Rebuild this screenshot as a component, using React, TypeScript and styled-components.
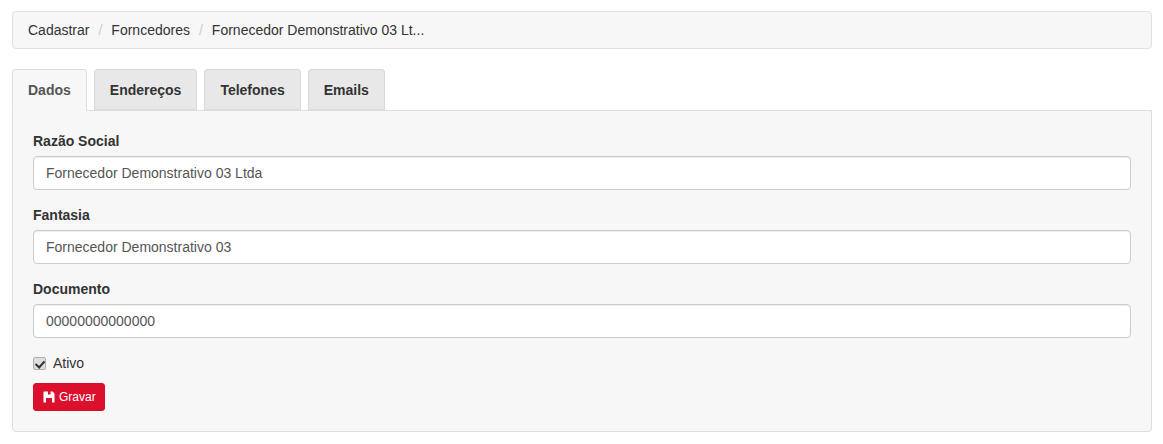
import React from 'react';
import styled, { createGlobalStyle } from 'styled-components';

const GlobalStyle = createGlobalStyle`
  * {
    box-sizing: border-box;
  }

  body {
    margin: 0;
    background: #fff;
    color: #333;
    font-family: 'Liberation Sans', Arial, sans-serif;
    font-size: 14px;
    line-height: 20px;
  }
`;

const crumbs = ['Cadastrar', 'Forncedores', 'Fornecedor Demonstrativo 03 Lt...'];
const tabs = ['Dados', 'Endereços', 'Telefones', 'Emails'];
const fields = [
  { label: 'Razão Social', value: 'Fornecedor Demonstrativo 03 Ltda' },
  { label: 'Fantasia', value: 'Fornecedor Demonstrativo 03' },
  { label: 'Documento', value: '00000000000000' },
];

const SaveIcon = () => (
  <svg width="12" height="12" viewBox="0 0 12 12" aria-hidden="true">
    <path
      fill="currentColor"
      fillRule="evenodd"
      d="M1 0.5H9.6L11.5 2.4V11.5H9V7H3V11.5H0.5V1C0.5 0.7 0.7 0.5 1 0.5ZM5 0.5H7.5V3.5H5Z"
    />
  </svg>
);

export default function App() {
  return (
    <Page>
      <GlobalStyle />
      <Breadcrumb>
        {crumbs.map((crumb, i) => (
          <Crumb key={crumb} first={i === 0}>
            {crumb}
          </Crumb>
        ))}
      </Breadcrumb>

      <TabList>
        {tabs.map((tab, i) => (
          <Tab key={tab} active={i === 0}>
            {tab}
          </Tab>
        ))}
      </TabList>

      <Panel>
        {fields.map(field => (
          <FormGroup key={field.label}>
            <Label>{field.label}</Label>
            <Input defaultValue={field.value} />
          </FormGroup>
        ))}

        <CheckRow>
          <Checkbox type="checkbox" defaultChecked />
          Ativo
        </CheckRow>

        <SaveButton type="button">
          <SaveIcon />
          Gravar
        </SaveButton>
      </Panel>
    </Page>
  );
}

const Page = styled.div`
  padding: 11px 11px 0 12px;
`;

const Breadcrumb = styled.ol`
  display: flex;
  height: 38px;
  margin: 0 0 20px;
  padding: 8px 15px;
  list-style: none;
  background: #f7f7f7;
  border: 1px solid #e0e0e0;
  border-radius: 4px;
`;

const Crumb = styled.li<{ first: boolean }>`
  &:before {
    content: ${p => (p.first ? 'none' : "'/'")};
    padding: 0 9px 0 9px;
    color: #ccc;
  }
`;

const TabList = styled.ul`
  display: flex;
  gap: 7px;
  margin: 0 0 -1px;
  padding: 0;
  list-style: none;
  position: relative;
  z-index: 1;
`;

const Tab = styled.li<{ active: boolean }>`
  height: ${p => (p.active ? '42px' : '41px')};
  padding: 10px 15px;
  font-weight: 700;
  color: ${p => (p.active ? '#555' : '#333')};
  background: ${p => (p.active ? '#f7f7f7' : '#e8e8e8')};
  border: 1px solid ${p => (p.active ? '#ddd' : '#d8d8d8')};
  border-bottom-color: ${p => (p.active ? '#f7f7f7' : '#ddd')};
  border-radius: 4px 4px 0 0;
`;

const Panel = styled.div`
  padding: 20px;
  background: #f7f7f7;
  border: 1px solid #ddd;
  border-radius: 0 0 4px 4px;
`;

const FormGroup = styled.div`
  margin-bottom: 15px;
`;

const Label = styled.label`
  display: block;
  margin-bottom: 5px;
  font-weight: 700;
`;

const Input = styled.input`
  display: block;
  width: 100%;
  height: 34px;
  padding: 6px 12px;
  font: inherit;
  color: #555;
  background: #fff;
  border: 1px solid #ccc;
  border-radius: 4px;
  box-shadow: inset 0 1px 1px rgba(0, 0, 0, 0.075);
`;

const CheckRow = styled.label`
  display: flex;
  align-items: center;
  gap: 7px;
  height: 20px;
  margin: 10px 0;
`;

const Checkbox = styled.input`
  appearance: none;
  position: relative;
  width: 13px;
  height: 13px;
  margin: 0;
  background: #dedede;
  border: 1px solid #b0b0b0;
  border-radius: 2px;

  &:checked:before {
    content: '';
    position: absolute;
    left: 3px;
    top: 1px;
    width: 4px;
    height: 7px;
    border: solid #333;
    border-width: 0 2px 2px 0;
    transform: rotate(42deg);
  }
`;

const SaveButton = styled.button`
  display: flex;
  align-items: center;
  gap: 4px;
  width: 72px;
  height: 28px;
  padding: 0 9px;
  font-family: inherit;
  font-size: 12px;
  line-height: 18px;
  color: #fff;
  background: #dc0f2d;
  border: 1px solid #d40e2b;
  border-radius: 3px;

  svg {
    flex-shrink: 0;
  }
`;
